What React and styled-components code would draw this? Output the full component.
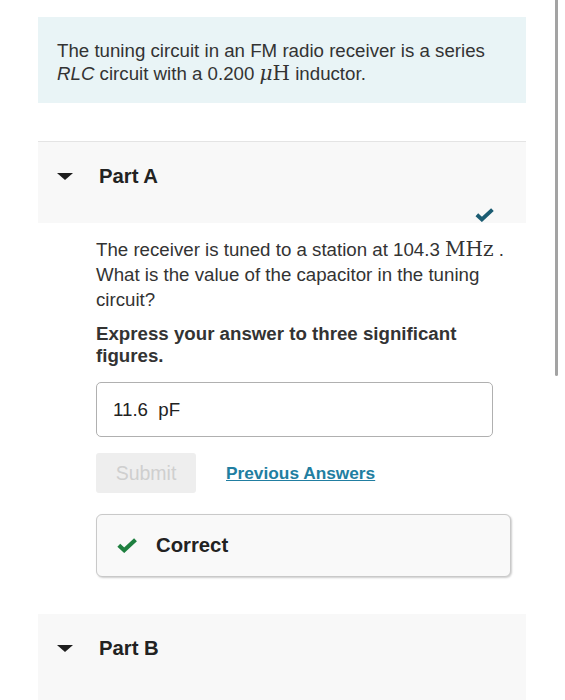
import styled, { createGlobalStyle } from "styled-components";

const GlobalStyle = createGlobalStyle`
  html, body {
    margin: 0;
    padding: 0;
    background: #ffffff;
  }
  body {
    font-family: "Liberation Sans", Arial, sans-serif;
    color: #333333;
  }
`;

const Page = styled.div`
  position: relative;
  width: 565px;
  height: 700px;
  overflow: hidden;
  padding: 17px 39px 0 38px;
  box-sizing: border-box;
`;

// fake scrollbar thumb at right edge
const ScrollThumb = styled.div`
  position: absolute;
  top: 0;
  left: 555px;
  width: 3px;
  height: 376px;
  background: #a3a3a3;
  border-radius: 0 0 2px 2px;
`;

const Intro = styled.div`
  background: #e9f4f6;
  padding: 22px 19px 18px 19px;
  font-size: 18.7px;
  line-height: 23px;
  color: #333;
`;

const Math = styled.span`
  font-family: "DejaVu Serif", "Liberation Serif", serif;
  font-size: ${(p) => p.size || "20px"};
  font-style: ${(p) => (p.italic ? "italic" : "normal")};
`;

const Section = styled.div`
  margin-top: ${(p) => p.gap}px;
`;

const PartHeader = styled.div`
  background: #f8f8f8;
  border-top: ${(p) => (p.divider ? "1px solid #e4e4e4" : "none")};
  height: ${(p) => p.h}px;
  position: relative;
  display: flex;
  align-items: flex-start;
  padding: 23px 0 0 19px;
  box-sizing: border-box;
`;

const Caret = styled.span`
  width: 0;
  height: 0;
  margin-top: 8px;
  border-left: 8px solid transparent;
  border-right: 8px solid transparent;
  border-top: 7px solid #1e1e1e;
`;

const PartTitle = styled.span`
  margin-left: 26px;
  font-size: 20.3px;
  font-weight: bold;
  color: #222;
  line-height: 22px;
`;

const DoneMark = styled.span`
  position: absolute;
  right: 32px;
  bottom: 1px;
`;

const Body = styled.div`
  padding: 14px 0 0 58px;
  width: 470px;
  box-sizing: border-box;
`;

const Question = styled.p`
  margin: 0;
  font-size: 18.7px;
  line-height: 25px;
  color: #333;
`;

const Instruction = styled.p`
  margin: 11px 0 0;
  font-size: 18.7px;
  line-height: 22px;
  font-weight: bold;
  color: #333;
`;

const AnswerField = styled.div`
  margin-top: 15px;
  width: 397px;
  height: 55px;
  border: 1px solid #b0b0b0;
  border-radius: 5px;
  box-sizing: border-box;
  display: flex;
  align-items: center;
  padding-left: 16px;
  font-size: 18.7px;
  color: #222;
`;

const Actions = styled.div`
  margin-top: 16px;
  display: flex;
  align-items: center;
  gap: 30px;
`;

const SubmitButton = styled.button`
  width: 100px;
  height: 40px;
  border: none;
  border-radius: 3px;
  background: #eeeeee;
  color: #cfcfcf;
  font-family: inherit;
  font-size: 19.5px;
  padding: 0;
`;

const PrevLink = styled.a`
  font-size: 17.3px;
  font-weight: bold;
  color: #217ea1;
  text-decoration: underline;
  cursor: pointer;
`;

const Feedback = styled.div`
  margin-top: 21px;
  width: 415px;
  height: 63px;
  background: #f9f9f9;
  border: 1px solid #c9c9c9;
  border-radius: 6px;
  box-shadow: 1px 1px 2px rgba(0, 0, 0, 0.2);
  box-sizing: border-box;
  display: flex;
  align-items: center;
  padding-left: 20px;
  gap: 19px;
`;

const FeedbackText = styled.span`
  font-size: 20.3px;
  font-weight: bold;
  color: #222;
`;

const Check = ({ color, w, h }) => (
  <svg width={w} height={h} viewBox="0 0 20 15" style={{ display: "block" }}>
    <path
      d="M1.8 7.2 L7.2 12.2 L18.5 1.8"
      fill="none"
      stroke={color}
      strokeWidth="4.2"
      strokeLinecap="butt"
      strokeLinejoin="miter"
    />
  </svg>
);

export default function App() {
  return (
    <>
      <GlobalStyle />
      <Page>
        <ScrollThumb />
        <Intro>
          The tuning circuit in an FM radio receiver is a series
          <br />
          <i>RLC</i> circuit with a 0.200 <Math italic>μ</Math>
          <Math>H</Math> inductor.
        </Intro>

        <Section gap={38}>
          <PartHeader divider h={82}>
            <Caret />
            <PartTitle>Part A</PartTitle>
            <DoneMark>
              <Check color="#1b5c72" w={19} h={14} />
            </DoneMark>
          </PartHeader>
          <Body>
            <Question>
              The receiver is tuned to a station at 104.3 <Math>MHz</Math> .
              <br />
              What is the value of the capacitor in the tuning
              <br />
              circuit?
            </Question>
            <Instruction>
              Express your answer to three significant
              <br />
              figures.
            </Instruction>
            <AnswerField>11.6&nbsp; pF</AnswerField>
            <Actions>
              <SubmitButton disabled>Submit</SubmitButton>
              <PrevLink>Previous Answers</PrevLink>
            </Actions>
            <Feedback>
              <Check color="#1f8040" w={20} h={15} />
              <FeedbackText>Correct</FeedbackText>
            </Feedback>
          </Body>
        </Section>

        <Section gap={37}>
          <PartHeader h={90}>
            <Caret />
            <PartTitle>Part B</PartTitle>
          </PartHeader>
        </Section>
      </Page>
    </>
  );
}
